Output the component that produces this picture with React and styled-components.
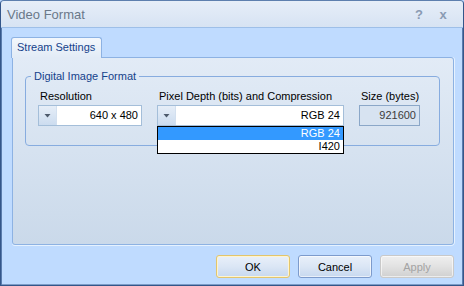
import React from 'react';
import styled, { createGlobalStyle } from 'styled-components';

const GlobalStyle = createGlobalStyle`
  html, body {
    margin: 0;
    padding: 0;
    background: #bfdbff;
  }
  body {
    font-family: Tahoma, "Liberation Sans", Arial, sans-serif;
  }
`;

const Window = styled.div`
  width: 464px;
  height: 286px;
  box-sizing: border-box;
  display: flex;
  flex-direction: column;
  background: #bfdbff;
  border: 1px solid #34568a;
  border-top-color: #5d7fae;
  box-shadow: inset 1px 0 0 #5a7cad, inset -1px 0 0 #5a7cad, inset 0 -1px 0 #7d9cc7;
  border-radius: 4px 4px 0 0;
  overflow: hidden;
`;

const TitleBar = styled.div`
  height: 26px;
  flex: none;
  display: flex;
  align-items: center;
  padding: 0 8px 0 6px;
  background: linear-gradient(#e6eef8, #d7e3f3);
  border-bottom: 1px solid #9ebfe8;
`;

const Title = styled.div`
  flex: 1;
  font-size: 13px;
  color: #6a7889;
`;

const TitleButton = styled.span`
  width: 24px;
  text-align: center;
  font-size: 13px;
  font-weight: bold;
  color: #8a9bb3;
`;

const Body = styled.div`
  flex: 1;
  display: flex;
  flex-direction: column;
  padding: 9px 9px 8px 10px;
`;

const TabStrip = styled.div`
  display: flex;
  height: 20px;
`;

const Tab = styled.div`
  box-sizing: border-box;
  height: 21px;
  padding: 3px 6px 0 5px;
  font-size: 11px;
  color: #15428b;
  background: linear-gradient(#f3f7fc, #e2ebf6);
  border: 1px solid #8db2e3;
  border-bottom: none;
  border-radius: 3px 3px 0 0;
  position: relative;
  z-index: 1;
  white-space: nowrap;
`;

const TabPanel = styled.div`
  height: 188px;
  margin-left: 1px;
  box-sizing: border-box;
  border: 1px solid #8db2e3;
  box-shadow: 0 1px 0 #e6f2ff, 1px 0 0 #e6f2ff;
  border-radius: 0 3px 3px 3px;
  background: linear-gradient(#e2ebf6, #cad9ea);
  padding: 12px 13px 0 12px;
`;

const Group = styled.fieldset`
  margin: 0;
  height: 76px;
  box-sizing: border-box;
  border: 1px solid #87acdf;
  border-radius: 4px;
  padding: 4px 12px 0 12px;
  position: relative;
`;

const Legend = styled.legend`
  font-size: 11px;
  color: #15428b;
  padding: 0 3px;
  margin-left: -7px;
  white-space: nowrap;
`;

const FieldRow = styled.div`
  display: flex;
  gap: 15px;
  margin-top: 4px;
`;

const Field = styled.div`
  display: flex;
  flex-direction: column;
  width: ${p => p.$w}px;
  position: relative;
`;

const Label = styled.div`
  font-size: 11px;
  color: #000;
  height: 15px;
  padding-left: 2px;
  white-space: nowrap;
`;

const Combo = styled.div`
  box-sizing: border-box;
  height: 21px;
  display: flex;
  border: 1px solid #a4bed9;
  background: #fff;
`;

const ComboButton = styled.div`
  width: 17px;
  flex: none;
  display: flex;
  align-items: center;
  justify-content: center;
  background: linear-gradient(#e6eef8, #ccdcef);
  border-right: 1px solid #d3e0ef;
`;

const ComboText = styled.div`
  flex: 1;
  text-align: right;
  font-size: 11px;
  line-height: 19px;
  padding-right: 3px;
  color: #000;
`;

const ReadOnlyBox = styled.div`
  box-sizing: border-box;
  height: 21px;
  border: 1px solid #8ba7c8;
  background: #d7e3f1;
  text-align: right;
  font-size: 11px;
  line-height: 19px;
  padding-right: 3px;
  color: #3c3c3c;
`;

const DropList = styled.div`
  position: absolute;
  left: 0;
  right: 0;
  top: 36px;
  border: 1px solid #000;
  background: #fff;
  z-index: 2;
`;

const DropItem = styled.div`
  height: 13px;
  font-size: 11px;
  line-height: 13px;
  text-align: right;
  padding-right: 3px;
  color: ${p => (p.$selected ? '#fff' : '#000')};
  background: ${p => (p.$selected ? '#3399ff' : '#fff')};
`;

const ButtonRow = styled.div`
  display: flex;
  justify-content: flex-end;
  gap: 8px;
  margin-top: 10px;
`;

const Button = styled.button`
  width: 74px;
  height: 23px;
  box-sizing: border-box;
  font-family: inherit;
  font-size: 11px;
  border-radius: 3px;
  padding: 0;
  color: ${p => (p.$disabled ? '#a3a3a3' : '#000')};
  background: ${p =>
    p.$disabled
      ? 'linear-gradient(#efefef, #e2e2e2 50%, #d0d0d0)'
      : 'linear-gradient(#e9f0fa, #dbe6f5 50%, #c7d8ef)'};
  border: 1px solid ${p => (p.$default ? '#e2c56d' : p.$disabled ? '#c9c9c9' : '#7d9bcc')};
  box-shadow: inset 0 0 0 1px ${p => (p.$default ? '#fff4cf' : 'rgba(255,255,255,0.6)')};
`;

const Arrow = () => (
  <svg width="7" height="5" viewBox="0 0 7 5">
    <path d="M0.5 1h6L3.5 4.5z" fill="#4d5a6c" />
  </svg>
);

export default function App() {
  return (
    <>
      <GlobalStyle />
      <Window>
        <TitleBar>
          <Title>Video Format</Title>
          <TitleButton>?</TitleButton>
          <TitleButton>x</TitleButton>
        </TitleBar>
        <Body>
          <TabStrip>
            <Tab>Stream Settings</Tab>
          </TabStrip>
          <TabPanel>
            <Group>
              <Legend>Digital Image Format</Legend>
              <FieldRow>
                <Field $w={104}>
                  <Label>Resolution</Label>
                  <Combo>
                    <ComboButton><Arrow /></ComboButton>
                    <ComboText>640 x 480</ComboText>
                  </Combo>
                </Field>
                <Field $w={187}>
                  <Label>Pixel Depth (bits) and Compression</Label>
                  <Combo>
                    <ComboButton><Arrow /></ComboButton>
                    <ComboText>RGB 24</ComboText>
                  </Combo>
                  <DropList>
                    <DropItem $selected>RGB 24</DropItem>
                    <DropItem>I420</DropItem>
                  </DropList>
                </Field>
                <Field $w={61}>
                  <Label>Size (bytes)</Label>
                  <ReadOnlyBox>921600</ReadOnlyBox>
                </Field>
              </FieldRow>
            </Group>
          </TabPanel>
          <ButtonRow>
            <Button $default>OK</Button>
            <Button>Cancel</Button>
            <Button $disabled>Apply</Button>
          </ButtonRow>
        </Body>
      </Window>
    </>
  );
}
